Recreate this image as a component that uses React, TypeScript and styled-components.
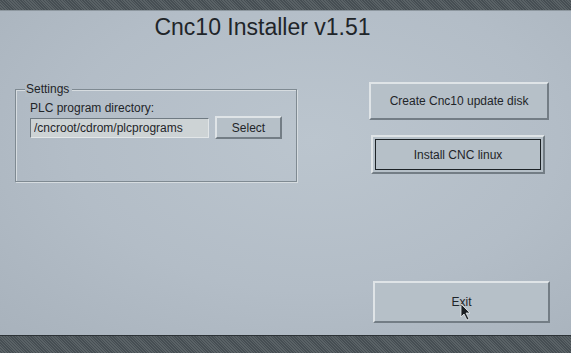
import React from 'react';
import styled, { createGlobalStyle } from 'styled-components';

const GlobalStyle = createGlobalStyle`
  html, body {
    margin: 0;
    padding: 0;
    background: #4e565b;
  }
  body {
    font-family: 'Liberation Sans', Arial, sans-serif;
  }
`;

const App = () => {
  return (
    <>
      <GlobalStyle />
      <Screen>
        <Band $height={10} />
        <Panel>
          <Title>Cnc10 Installer v1.51</Title>
          <Body>
            <GroupBox>
              <Legend>Settings</Legend>
              <FieldLabel>PLC program directory:</FieldLabel>
              <FieldRow>
                <PathInput readOnly value="/cncroot/cdrom/plcprograms" />
                <Button $width={67} $height={23}>
                  Select
                </Button>
              </FieldRow>
            </GroupBox>
            <Actions>
              <Button $width={180} $height={38}>
                Create Cnc10 update disk
              </Button>
              <Button $width={174} $height={39} $focused>
                Install CNC linux
              </Button>
              <ExitWrap>
                <Button $width={177} $height={42}>
                  Exit
                </Button>
                <Cursor viewBox="0 0 12 18" width="12" height="18">
                  <path
                    d="M1 1 L1 14 L4 11 L7 17 L9 16 L6 10 L10 10 Z"
                    fill="#1a1e22"
                    stroke="#e8ecee"
                    strokeWidth="0.8"
                  />
                </Cursor>
              </ExitWrap>
            </Actions>
          </Body>
        </Panel>
        <Band $height={17} />
      </Screen>
    </>
  );
};

const Screen = styled.div`
  width: 571px;
  height: 353px;
  display: flex;
  flex-direction: column;
  overflow: hidden;
  background: #4e565b;
`;

const Band = styled.div<{ $height: number }>`
  height: ${(p) => p.$height}px;
  flex-shrink: 0;
  background: repeating-linear-gradient(
    45deg,
    #5a6266 0px,
    #5a6266 1px,
    #464e53 1px,
    #464e53 2px
  );
`;

const Panel = styled.div`
  flex: 1;
  display: flex;
  flex-direction: column;
  background: radial-gradient(
    ellipse at 55% 40%,
    #bbc5ce 0%,
    #b3bdc7 55%,
    #a8b2bc 100%
  );
  border-top: 1px solid #8d979f;
  border-bottom: 1px solid #2c3236;
`;

const Title = styled.h1`
  margin: 1px 0 0;
  padding-right: 46px;
  text-align: center;
  font-family: 'Liberation Sans', Arial, sans-serif;
  font-weight: normal;
  font-size: 23px;
  line-height: 30px;
  color: #1f2529;
`;

const Body = styled.div`
  flex: 1;
  display: flex;
  justify-content: space-between;
  align-items: flex-start;
  padding: 40px 21px 12px 15px;
`;

const GroupBox = styled.fieldset`
  position: relative;
  width: 282px;
  height: 93px;
  margin: 7px 0 0;
  padding: 11px 0 0 14px;
  box-sizing: border-box;
  border: 1px solid #7f8a92;
  box-shadow: inset 1px 1px 0 #d6dce0, 1px 1px 0 #d6dce0;
  display: flex;
  flex-direction: column;
`;

const Legend = styled.span`
  position: absolute;
  top: -8px;
  left: 9px;
  padding: 0 3px 0 1px;
  background: #b2bcc5;
  font-size: 12px;
  line-height: 15px;
  color: #1f2529;
`;

const FieldLabel = styled.div`
  font-size: 12px;
  line-height: 15px;
  color: #1f2529;
`;

const FieldRow = styled.div`
  display: flex;
  align-items: center;
  gap: 6px;
  margin-top: 0;
`;

const PathInput = styled.input`
  width: 179px;
  height: 20px;
  box-sizing: border-box;
  margin: 0;
  padding: 0 3px;
  border: none;
  border-top: 1px solid #6f7a82;
  border-left: 1px solid #6f7a82;
  border-bottom: 1px solid #e2e6e8;
  border-right: 1px solid #e2e6e8;
  background: #cdd3d5;
  font-family: 'Liberation Sans', Arial, sans-serif;
  font-size: 12px;
  color: #1f2529;
  outline: none;
`;

const Actions = styled.div`
  align-self: stretch;
  display: flex;
  flex-direction: column;
  align-items: flex-start;
  gap: 15px;
`;

const Button = styled.button<{ $width: number; $height: number; $focused?: boolean }>`
  position: relative;
  width: ${(p) => p.$width}px;
  height: ${(p) => p.$height}px;
  margin: 0;
  padding: 0;
  box-sizing: border-box;
  background: #b6c0c8;
  border-top: 2px solid #dfe4e7;
  border-left: 2px solid #dfe4e7;
  border-bottom: 2px solid #737d85;
  border-right: 2px solid #737d85;
  font-family: 'Liberation Sans', Arial, sans-serif;
  font-size: 12px;
  color: #1f2529;
  cursor: pointer;
  outline: ${(p) => (p.$focused ? '1px solid #1c2226' : 'none')};
  outline-offset: ${(p) => (p.$focused ? '-5px' : '0')};
  margin-left: ${(p) => (p.$focused ? '2px' : '0')};
`;

const ExitWrap = styled.div`
  position: relative;
  margin-top: auto;
  margin-left: 4px;
`;

const Cursor = styled.svg`
  position: absolute;
  left: 87px;
  top: 22px;
  pointer-events: none;
`;

export default App;
